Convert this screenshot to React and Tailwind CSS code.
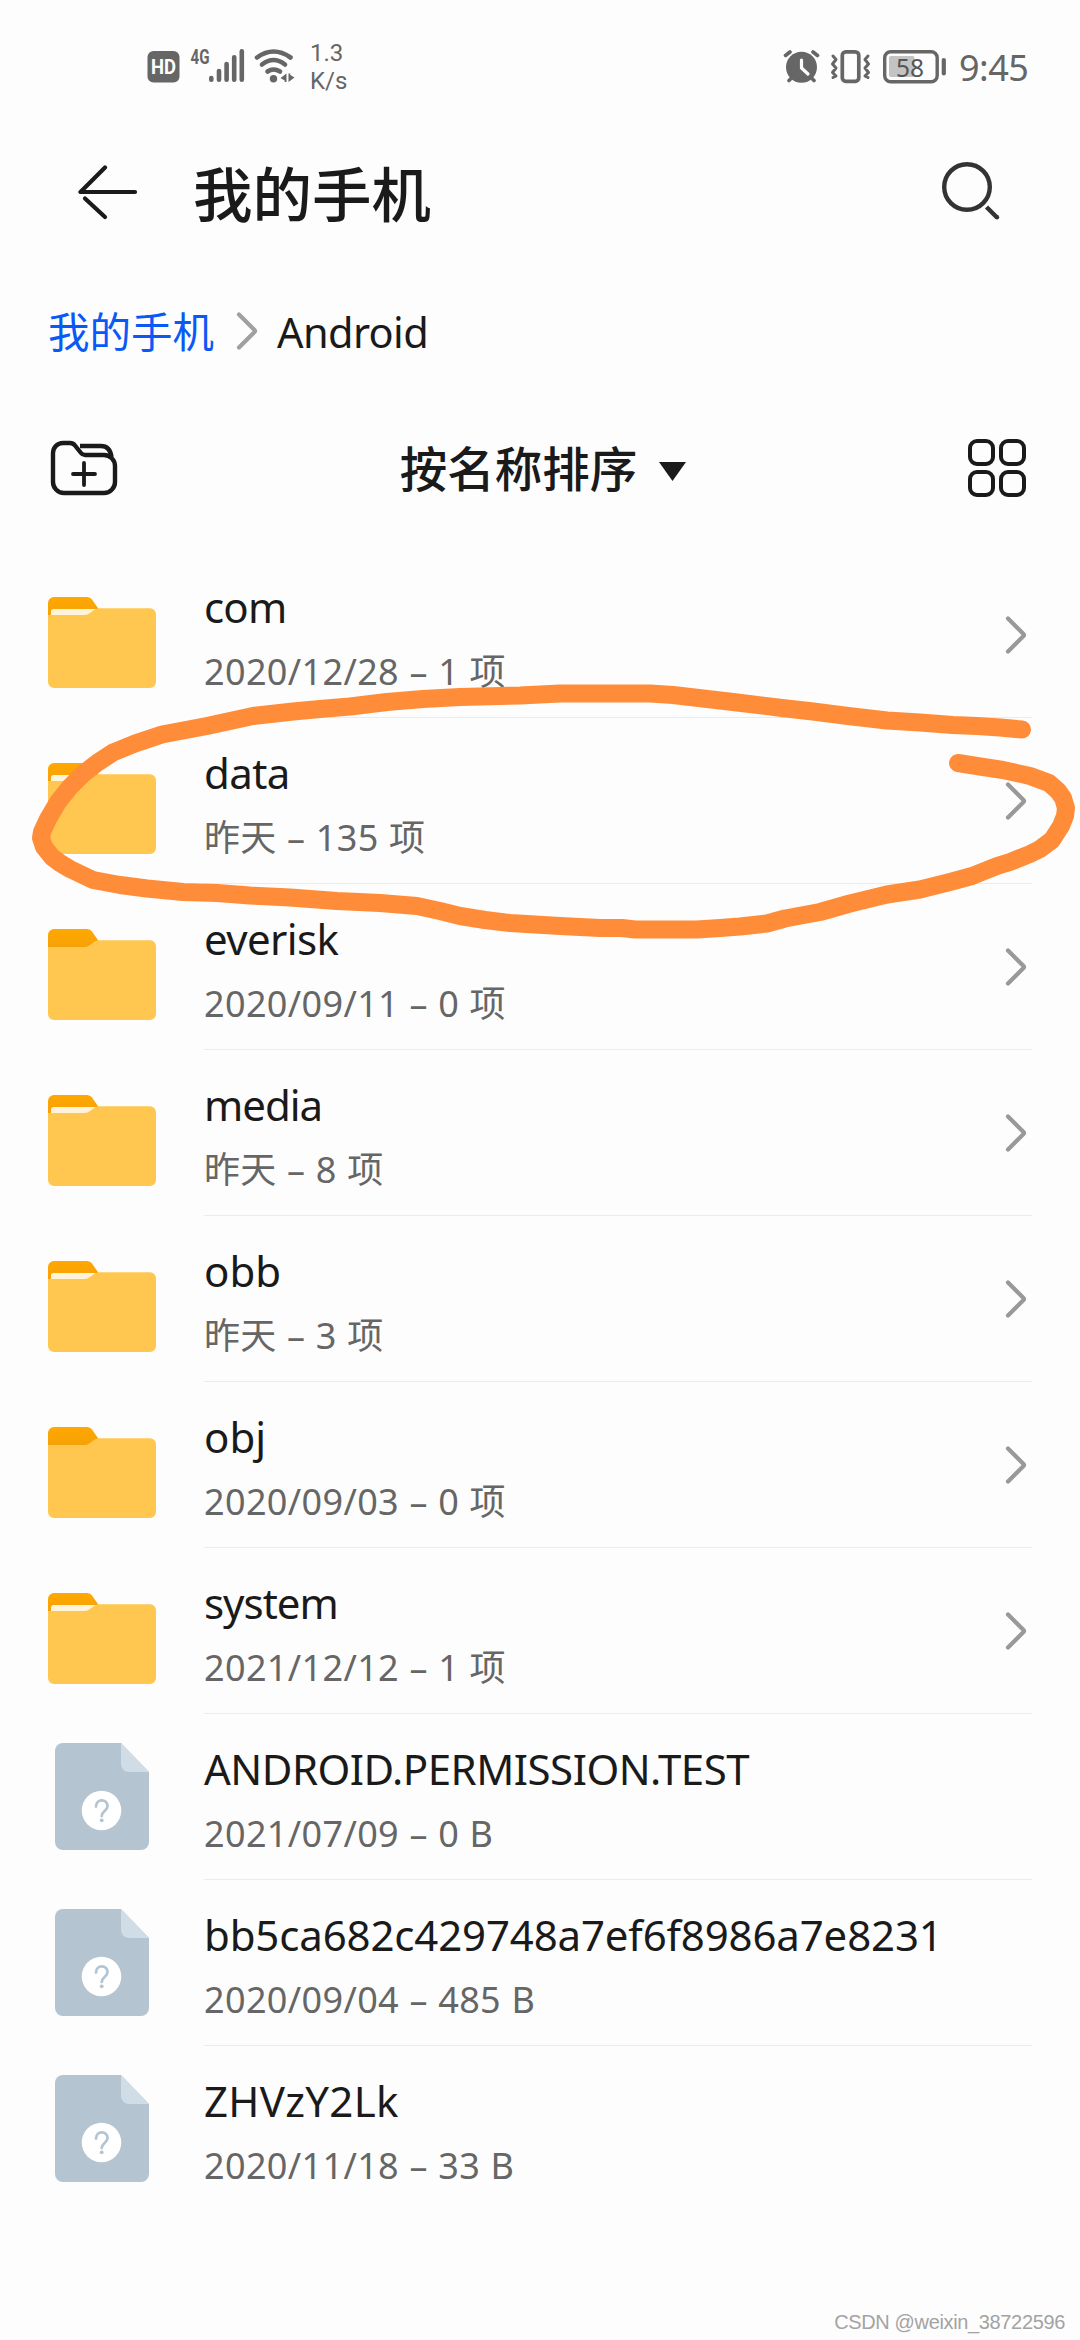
const entries = [
  { name: 'com', info: '2020/12/28 – 1 项', type: 'folder', tracking: 'tracking-[-0.8px]' },
  { name: 'data', info: '昨天 – 135 项', type: 'folder', tracking: 'tracking-[-0.6px]' },
  { name: 'everisk', info: '2020/09/11 – 0 项', type: 'folder', empty: true, tracking: 'tracking-[-0.6px]' },
  { name: 'media', info: '昨天 – 8 项', type: 'folder', tracking: 'tracking-[-1px]' },
  { name: 'obb', info: '昨天 – 3 项', type: 'folder', tracking: 'tracking-normal' },
  { name: 'obj', info: '2020/09/03 – 0 项', type: 'folder', empty: true, tracking: 'tracking-normal' },
  { name: 'system', info: '2021/12/12 – 1 项', type: 'folder', tracking: 'tracking-[-1px]' },
  { name: 'ANDROID.PERMISSION.TEST', info: '2021/07/09 – 0 B', type: 'file', tracking: 'tracking-[-0.5px]' },
  { name: 'bb5ca682c429748a7ef6f8986a7e8231', info: '2020/09/04 – 485 B', type: 'file', tracking: 'tracking-[-0.15px]' },
  { name: 'ZHVzY2Lk', info: '2020/11/18 – 33 B', type: 'file', tracking: 'tracking-[0.3px]' }
]

const FolderIcon = ({ empty = false }) => (
  <svg className="w-[108px] h-[91px]" viewBox="0 0 108 91" aria-hidden="true">
    <defs>
      <linearGradient id="tab" x1="0" y1="0" x2="0" y2="1">
        <stop offset="0" stopColor="#ffa800" />
        <stop offset="1" stopColor="#f09c0c" />
      </linearGradient>
    </defs>
    <path d="M0 30V6a6 6 0 0 1 6-6h33q3.500 0 5 2.500L52 14V30z" fill="url(#tab)" />
    {!empty && <path d="M3 19V14.500q0-2.500 2.500-2.500H48V19z" fill="#fff3d9" />}
    <path d="M0 18h37q2.500 0 5-2l4-3q2-1.700 5-1.700h51a6 6 0 0 1 6 6V85a6 6 0 0 1-6 6H6a6 6 0 0 1-6-6z" fill="#ffc750" />
  </svg>
)

const FileIcon = () => (
  <svg className="w-[94px] h-[107px]" viewBox="0 0 94 107" aria-hidden="true">
    <path d="M8 0H66L94 29V99a8 8 0 0 1-8 8H8a8 8 0 0 1-8-8V8a8 8 0 0 1 8-8z" fill="#b4c4d1" />
    <path d="M66 0L94 29H74a8 8 0 0 1-8-8z" fill="#d1dde6" />
    <circle cx="46.500" cy="67.500" r="19.800" fill="#fff" />
    <path d="M41 63.500c0-8 11.500-8 11.500-.5 0 5-5.800 5-5.800 10" fill="none" stroke="#b4c4d1" strokeWidth="2.800" strokeLinecap="round" />
    <circle cx="46.700" cy="77.300" r="1.900" fill="#b4c4d1" />
  </svg>
)

const Chevron = ({ className = '' }) => (
  <svg className={`w-[22px] h-[40px] ${className}`} viewBox="0 0 22 40" fill="none" stroke="currentColor" strokeWidth="4.200" strokeLinecap="round" strokeLinejoin="round" aria-hidden="true">
    <path d="M3 3.500L18.500 19q1 1 0 2L3 36.500" />
  </svg>
)

const StatusBar = () => (
  <div className="flex h-[108px] items-center pt-[26px] pl-[147px] pr-[51px] text-[#666]">
    <svg className="w-[148px] h-[60px]" viewBox="147 37 148 60" aria-hidden="true">
      <rect x="147.500" y="51" width="32" height="31.500" rx="6" fill="currentColor" />
      <text x="163.500" y="74" textAnchor="middle" textLength="25" lengthAdjust="spacingAndGlyphs" className="font-['Roboto'] font-bold text-[20px]" fill="#fff">HD</text>
      <text x="190.500" y="64" textLength="19" lengthAdjust="spacingAndGlyphs" className="font-['Roboto'] font-bold text-[20px]" fill="currentColor">4G</text>
      <g stroke="currentColor" strokeWidth="4.600" strokeLinecap="round">
        <path d="M211.300 78V79.700M219 71V79.700M226.600 64V79.700M234.200 57.300V79.700M241.800 51.300V79.700" />
      </g>
      <g stroke="currentColor" strokeWidth="4.600" strokeLinecap="round" fill="none">
        <path d="M257 57.500Q273.500 45.500 290.500 57.500" />
        <path d="M262 64.500Q273.500 55.500 285 64.500" />
        <path d="M267.500 71.500Q273.500 67.500 280 71.500" />
      </g>
      <circle cx="273.500" cy="78.800" r="3.700" fill="currentColor" />
      <path d="M286.500 73.500V82H284.700V80.500L280.500 78zM288.500 82V73.500H290.300V75L294.500 77.500z" fill="currentColor" />
    </svg>
    <div className="ml-[15px] font-['Roboto'] text-[24px] leading-[28px]">
      <div>1.3</div>
      <div>K/s</div>
    </div>
    <div className="ml-auto flex items-center">
      <svg className="w-[164px] h-[60px]" viewBox="783 37 164 60" fill="none" stroke="currentColor" strokeLinecap="round" strokeLinejoin="round" aria-hidden="true">
        <circle cx="801.500" cy="67.200" r="15.500" fill="currentColor" stroke="none" />
        <path d="M785.500 55.500L790 52M817.500 55.500L813 52M789 80.500L791.500 78M814 80.500L811.500 78" strokeWidth="3.600" />
        <path d="M801.500 60V68L808 74" stroke="#fdfdfd" strokeWidth="3.200" />
        <rect x="842.300" y="51.800" width="16.500" height="29.500" rx="3.500" strokeWidth="3.700" />
        <path d="M833 56L836 59.500L832.500 64L836 68L832.500 72.500L836 76L833 77.500M868 56L865 59.500L868.500 64L865 68L868.500 72.500L865 76L868 77.500" strokeWidth="3" />
        <rect x="889" y="56" width="25.500" height="21" rx="2" fill="#c3c3c3" stroke="none" />
        <rect x="884.700" y="51.700" width="52.500" height="30" rx="6" strokeWidth="3.400" />
        <path d="M943.800 60V73.500" strokeWidth="4.200" />
        <text x="910" y="76.500" textAnchor="middle" textLength="28" lengthAdjust="spacingAndGlyphs" className="font-['Noto_Sans'] text-[26px]" fill="#555" stroke="none">58</text>
      </svg>
      <span className="mt-[2px] ml-[12px] w-[70px] font-['Noto_Sans'] text-[36px] leading-[48px] tracking-[-0.5px] whitespace-nowrap">9:45</span>
    </div>
  </div>
)

const Header = () => (
  <header className="flex h-[170px] items-center pl-[76px] pr-[80px] text-[#1a1a1a]">
    <svg className="w-[64px] h-[56px]" viewBox="76 165 64 56" fill="none" stroke="currentColor" strokeWidth="4.200" strokeLinecap="round" strokeLinejoin="round" aria-hidden="true">
      <path d="M105 167.500L80.500 192H135" />
      <path d="M85 198.500L105 217" />
    </svg>
    <h1 className="mt-[2px] ml-[53px] text-[59.5px] leading-[80px] font-medium">我的手机</h1>
    <svg className="ml-auto w-[60px] h-[70px] text-[#333]" viewBox="940 158 60 70" fill="none" stroke="currentColor" strokeWidth="4.400" aria-hidden="true">
      <circle cx="967" cy="187" r="22.800" />
      <path d="M986.500 207L997 217.500" />
      <circle cx="997" cy="217.200" r="2.200" fill="currentColor" stroke="none" />
    </svg>
  </header>
)

const Breadcrumb = () => (
  <nav className="flex h-[106px] items-center pl-[48px] text-[41.5px] leading-[60px]">
    <span className="mt-[2px] text-[#0a59f7]">我的手机</span>
    <Chevron className="ml-[22px] text-[#a0a0a0]" />
    <span className="mt-[2px] ml-[19px] tracking-[-0.6px] text-[#1a1a1a]">Android</span>
  </nav>
)

const Toolbar = () => (
  <div className="flex h-[168px] items-center justify-between pl-[50px] pr-[54px] text-[#1a1a1a]">
    <svg className="w-[68px] h-[56px]" viewBox="50 440 68 56" fill="none" stroke="currentColor" strokeWidth="4.400" strokeLinejoin="round" aria-hidden="true">
      <path d="M53 453a10 10 0 0 1 10-10H70q3 0 5 2.500L81 453q1.500 2 4 2H104a11 11 0 0 1 11 11V482a11 11 0 0 1-11 11H64a11 11 0 0 1-11-11z" />
      <path d="M80 446H101q9 0 10.500 11" />
      <path d="M84 463V485M73 474H95" strokeLinecap="round" strokeWidth="3.800" />
    </svg>
    <div className="flex items-center">
      <span className="mt-[2px] text-[47.5px] leading-[64px] font-medium">按名称排序</span>
      <svg className="mt-[7px] ml-[22px] w-[27px] h-[19px]" viewBox="0 0 27 19" fill="currentColor" aria-hidden="true">
        <path d="M0 0H27L13.500 19z" />
      </svg>
    </div>
    <div className="grid grid-cols-2 gap-[4px]">
      {[0, 1, 2, 3].map((i) => (
        <span key={i} className="size-[27px] rounded-[9px] border-4 border-[#1a1a1a]" />
      ))}
    </div>
  </div>
)

const EntryRow = ({ entry, isLast }) => (
  <li className="flex h-[166px] pl-[48px] pr-[48px]">
    <div className="flex w-[156px] shrink-0">
      {entry.type === 'folder' ? (
        <div className="pt-[45px]"><FolderIcon empty={entry.empty} /></div>
      ) : (
        <div className="pt-[29px] pl-[7px]"><FileIcon /></div>
      )}
    </div>
    <div className={`flex flex-1 justify-between border-b ${isLast ? 'border-transparent' : 'border-[#ececec]'}`}>
      <div className="pt-[27px] whitespace-nowrap">
        <p className={`text-[42px] leading-[56px] text-[#1a1a1a] ${entry.tracking}`}>{entry.name}</p>
        <p className="mt-[13px] text-[36px] leading-[48px] tracking-[0.35px] [word-spacing:0.7px] text-[#666]">{entry.info}</p>
      </div>
      {entry.type === 'folder' && <Chevron className="mt-[63px] mr-[5px] text-[#999]" />}
    </div>
  </li>
)

// Hand-drawn loop around the data folder
const Scribble = () => (
  <svg className="pointer-events-none absolute top-0 left-0 w-[1080px] h-[2340px]" viewBox="0 0 1080 2340" aria-hidden="true">
    <polyline
      fill="none"
      stroke="#ff8c38"
      strokeWidth="18"
      strokeLinecap="round"
      strokeLinejoin="round"
      points="1022,729.500 1000,727.500 977,726 953,725 920,722.500 887,720.500 848,716 813,711.500 782,708 733,702 673,695 650,693.500 600,693.500 560,693.500 520,695.500 460,697 423,699 387,702 350,706.500 320,709 293,711.500 253,716 230,721 207,726 162,734.500 135,743.500 113,752.500 97,763 83,774 70,787 58,802 48,819 42,832 41,838 44,847 52,857 60,863 70,869 93,880 120,885 147,888.500 183,892 217,893 250,895.500 290,897.500 337,901 380,903 417,906 440,911 460,916 485,920 510,923 560,926 600,928 622,928 635,929.500 697,929.500 720,928 740,926.500 767,923.500 785,918.500 820,912 850,903.500 887,894.500 920,889.500 950,882 972,876 997,866 1010,862 1030,854 1040,849 1052,840 1061,826 1065,816 1066,808 1063,798 1058,791 1049,783 1030,776 1003,770 980,766.500 958,763"
    />
  </svg>
)

export default function App() {
  return (
    <div className="relative h-[2340px] w-[1080px] overflow-hidden bg-[#fdfdfd] font-['Noto_Sans','Noto_Sans_CJK_SC',sans-serif]">
      <StatusBar />
      <Header />
      <Breadcrumb />
      <Toolbar />
      <ul>
        {entries.map((entry, index) => (
          <EntryRow key={entry.name} entry={entry} isLast={index === entries.length - 1} />
        ))}
      </ul>
      <Scribble />
      <div className="absolute right-[15px] bottom-[6px] font-['Liberation_Sans'] text-[20px] leading-[24px] tracking-[-0.35px] text-[#a3a3a3]">
        CSDN @weixin_38722596
      </div>
    </div>
  )
}
